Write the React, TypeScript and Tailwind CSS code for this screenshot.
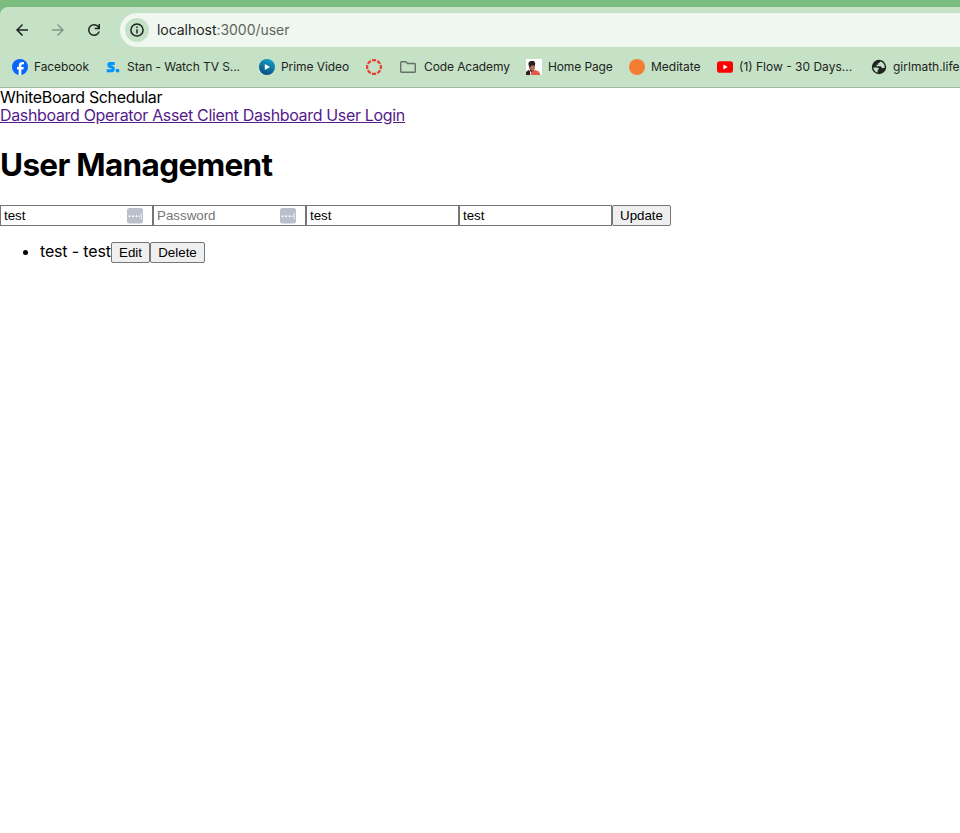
import React from "react";

const inter = "font-['Inter','Liberation_Sans',sans-serif]";
const arial = "font-['Liberation_Sans',Arial,sans-serif]";

function Bookmark({ width, label, text = "", children }: { width: string; label?: string; text?: string; children: React.ReactNode }) {
  return (
    <div className={`flex h-4 shrink-0 items-center ${width}`}>
      <span className="flex size-4 shrink-0">{children}</span>
      {label && <span className={`ml-1.5 whitespace-nowrap text-[12px] leading-4 ${text}`}>{label}</span>}
    </div>
  );
}

function KeyBadge() {
  return (
    <svg className="mr-[9px] size-4 shrink-0" viewBox="0 0 16 16">
      <rect width="16" height="15.500" rx="2.500" fill="#b9c0cc" />
      <g fill="#fff">
        <circle cx="2.600" cy="8.300" r="1.050" />
        <circle cx="6.100" cy="8.300" r="1.050" />
        <circle cx="9.600" cy="8.300" r="1.050" />
        <circle cx="12.200" cy="8.300" r=".7" />
        <rect x="13.700" y="5" width="1" height="6.500" opacity=".8" />
      </g>
    </svg>
  );
}

function Field({ value, placeholder, badge }: { value?: string; placeholder?: string; badge?: boolean }) {
  return (
    <div className="flex h-[21px] w-[153px] items-center border border-[#767676] bg-white">
      <input
        className={`h-[15px] w-full min-w-0 pl-[3px] text-[13.333px] leading-[15px] text-black outline-none placeholder:text-[#757575] ${arial}`}
        defaultValue={value}
        placeholder={placeholder}
      />
      {badge && <KeyBadge />}
    </div>
  );
}

function PlainButton({ children, width }: { children: string; width: string }) {
  return (
    <button className={`h-[21px] shrink-0 whitespace-nowrap rounded-[2px] border border-[#767676] bg-[#efefef] text-center text-[13.333px] leading-[19px] text-black ${arial} ${width}`}>
      {children}
    </button>
  );
}

function Browser() {
  return (
    <header className="h-[88px] overflow-hidden bg-[#7abd7e] pt-[7px]">
      <div className="h-[81px] rounded-tl-[8px] border-b border-[#a1b5a2] bg-[#c5e1c6] pt-1.5">
        <div className="flex h-[34px] items-center pl-[13px]">
          <svg className="size-[18px]" viewBox="0 0 24 24" fill="#1f2421"><path d="M20 11H7.83l5.59-5.59L12 4l-8 8 8 8 1.41-1.41L7.83 13H20v-2z" /></svg>
          <svg className="ml-[18px] size-[18px]" viewBox="0 0 24 24" fill="#83978a"><path d="M4 11h12.17l-5.59-5.59L12 4l8 8-8 8-1.41-1.41L16.17 13H4v-2z" /></svg>
          <svg className="ml-[18px] size-[18px]" viewBox="0 0 24 24" fill="#1f2421"><path d="M12 20q-3.35 0-5.675-2.325T4 12q0-3.35 2.325-5.675T12 4q1.725 0 3.3.712T18 6.75V4h2v7h-7V9h4.2q-.8-1.4-2.187-2.2T12 6Q9.500 6 7.750 7.750T6 12q0 2.500 1.750 4.250T12 18q1.925 0 3.475-1.100T17.650 14h2.100q-.7 2.650-2.850 4.325T12 20" /></svg>
          <div className="ml-[17px] flex h-[34px] flex-1 items-center rounded-l-full bg-[#f0f7f0] pl-[5px]">
            <span className="flex size-6 items-center justify-center rounded-full bg-[#c5e1c6]">
              <svg className="size-[14px]" viewBox="0 0 14 14" fill="none" stroke="#1f2421" strokeWidth="1.500"><circle cx="7" cy="7" r="6.100" /><path d="M7 6.200v4.300M7 3.500v1.500" /></svg>
            </span>
            <span className="ml-2 whitespace-nowrap text-[14px] leading-5 tracking-[-0.04px] text-[#1f2421]">localhost<span className="text-[#5f6661]">:3000/user</span></span>
          </div>
        </div>
        <nav className="mt-3 flex h-4 pl-3 text-[#1f2421]">
          <Bookmark width="w-[93px]" label="Facebook" text="tracking-[-0.1px]">
            <svg viewBox="0 0 16 16"><circle cx="8" cy="8" r="8" fill="#0866ff" /><path fill="#fff" d="M6.700 15.900v-5.400H5V8h1.700V6.900c0-2.700 1.200-4 3.900-4 .5 0 1.100.1 1.400.2v2.200h-.8c-1.400 0-1.900.5-1.900 1.900V8h2.500l-.4 2.500H9.300v5.400z" /></svg>
          </Bookmark>
          <Bookmark width="w-[154px]" label="Stan - Watch TV S..." text="tracking-[-0.07px]">
            <svg viewBox="0 0 16 16"><path d="M9.700 4.400H5.200C3.400 4.400 3.200 7 5 7.500l2 .6c1.900.6 1.700 3.600-.4 3.600H1.700" fill="none" stroke="#0095ff" strokeWidth="3" /><circle cx="12.500" cy="11.600" r="1.900" fill="#0095ff" /></svg>
          </Bookmark>
          <Bookmark width="w-[107px]" label="Prime Video" text="tracking-[-0.07px]">
            <svg viewBox="0 0 16 16"><defs><linearGradient id="prime" x1=".7" y1="0" x2=".3" y2="1"><stop stopColor="#15a0c8" /><stop offset="1" stopColor="#074a82" /></linearGradient></defs><circle cx="8" cy="8" r="8" fill="url(#prime)" /><path d="M5.800 5v6l5.200-3z" fill="#fff" /></svg>
          </Bookmark>
          <Bookmark width="w-[34px]">
            <svg viewBox="0 0 16 16"><circle cx="8" cy="8" r="6.900" fill="none" stroke="#e93b32" strokeWidth="2.200" pathLength="80" strokeDasharray="7.500 2.500" strokeDashoffset="3.750" /></svg>
          </Bookmark>
          <Bookmark width="w-[126px]" label="Code Academy" text="pl-0.5 tracking-[-0.1px]">
            <svg viewBox="0 0 16 16" fill="none" stroke="#667268" strokeWidth="1.400"><path d="M1.500 2.700h4.300l1.700 1.800h7c.5 0 .8.3.8.8v7.200c0 .5-.3.8-.8.8h-13c-.5 0-.8-.3-.8-.8v-9c0-.5.3-.8.8-.8z" /></svg>
          </Bookmark>
          <Bookmark width="w-[103px]" label="Home Page" text="tracking-[-0.12px]">
            <svg viewBox="0 0 16 16"><path fill="#fff" d="M0 0h16v16H0z" /><path fill="#b9735b" d="M4 4h5v5l-1 3H5l-2-3z" /><path fill="#2a2022" d="M2.500 6V3.500L4.500 2H8l1.200 2v1H5v3H3.500zM5 5h4v1.500H5zM0 13l2.500-2L4 12v4H0z" /><path fill="#55302b" d="M3.500 8L5 11l2 1 1-1v1.500L6 14l-2-2z" /><path fill="#e5584c" d="M4.500 16l.5-2.500L9 11l4 1.500 1.500 3.500z" /></svg>
          </Bookmark>
          <Bookmark width="w-[88px]" label="Meditate">
            <svg viewBox="0 0 16 16"><circle cx="8" cy="8" r="8" fill="#f47d31" /></svg>
          </Bookmark>
          <Bookmark width="w-[154px]" label="(1) Flow - 30 Days...">
            <svg viewBox="0 0 16 16"><rect y="2.300" width="16" height="11.400" rx="2.800" fill="#f00" /><path d="M6.400 5.600v4.800L10.600 8z" fill="#fff" /></svg>
          </Bookmark>
          <Bookmark width="w-[93px]" label="girlmath.life">
            <svg viewBox="0 0 16 16"><circle cx="8" cy="8" r="7.200" fill="#202421" /><path d="M2.300 8.500h3.600c1.300 0 2.200.9 2.200 2.100H6.700v2.900C4.300 13 2.500 11.200 2.300 8.500zM9 2.400c-.1 1.200-.5 1.500-1.800 1.500v1.800H5.500v1.500h4.200c.6 0 .6 1.800 1.600 1.800h2.300C14.300 5.900 12 2.900 9 2.400z" fill="#c5e1c6" /></svg>
          </Bookmark>
        </nav>
      </div>
    </header>
  );
}

export default function App() {
  return (
    <div className={`h-[833px] overflow-hidden bg-white text-black ${inter}`}>
      <Browser />
      <main>
        <div className="h-[18px] whitespace-nowrap text-[16px] leading-[18px] tracking-[-0.35px]">WhiteBoard Schedular</div>
        <nav className="h-[18px] whitespace-nowrap text-[16px] leading-[18px] tracking-[-0.34px] text-[#551a8b] underline">
          <a>Dashboard </a><a>Operator </a><a>Asset </a><a>Client </a><a>Dashboard </a><a>User </a><a>Login</a>
        </nav>
        <h1 className="mt-[22px] h-[38px] whitespace-nowrap text-[31.5px] font-bold leading-[38px] tracking-[-0.68px]">User Management</h1>
        <form className="mt-[21px] flex">
          <Field value="test" badge />
          <Field placeholder="Password" badge />
          <Field value="test" />
          <Field value="test" />
          <PlainButton width="w-[59px]">Update</PlainButton>
        </form>
        <ul className="mt-4">
          <li className="flex h-[21px] items-start pl-[23px]">
            <span className="mt-2 size-[5px] rounded-full bg-black" />
            <span className="ml-3 w-[71px] whitespace-nowrap text-[16px] leading-[18px] tracking-[-0.16px]">test - test</span>
            <PlainButton width="w-[39px]">Edit</PlainButton>
            <PlainButton width="w-[55px]">Delete</PlainButton>
          </li>
        </ul>
      </main>
    </div>
  );
}
